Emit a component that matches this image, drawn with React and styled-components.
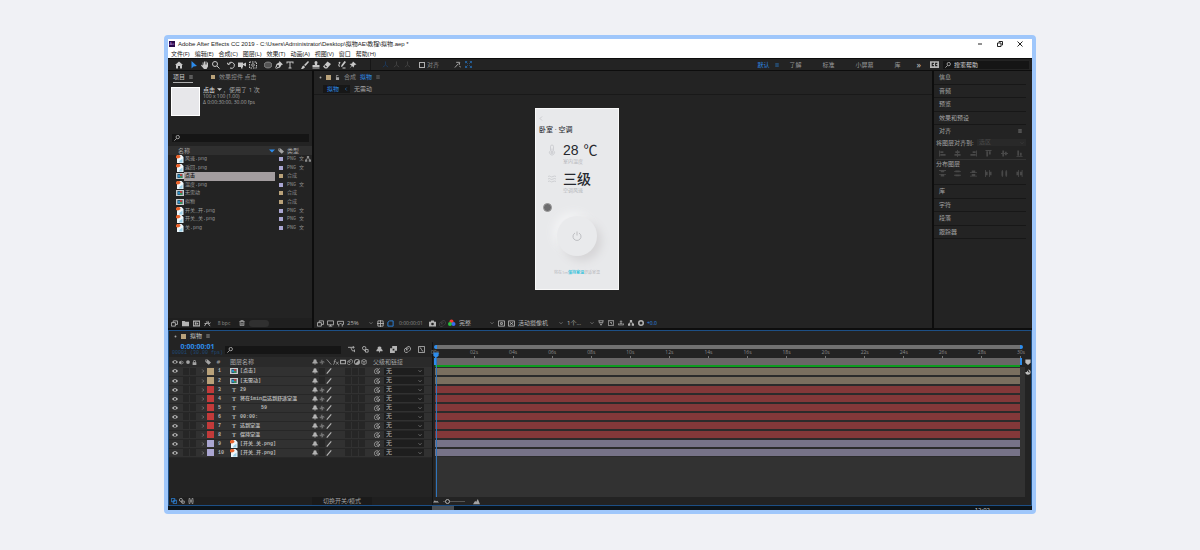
import { useState } from "react";
import styled, { createGlobalStyle, css } from "styled-components";

const GlobalStyle = createGlobalStyle`
  * {
    box-sizing: border-box;
  }

  body {
    margin: 0;
    background: #f0f1f5;
    color: #a4a4a4;
    font-family: "Open Sans", "Noto Sans CJK SC", sans-serif;
    font-size: 6px;
    line-height: 8px;
  }

  button, input, select {
    margin: 0;
    padding: 0;
    border: 0;
    background: none;
    color: inherit;
    font: inherit;
    outline: none;
  }

  svg {
    display: block;
    flex: none;
  }
`;

/* ---------- icons ---------- */

const line = { fill: "none", stroke: "currentColor", strokeWidth: 2 };

const glyphs = {
  home: <path d="M8 1 0 8h2v7h4v-5h4v5h4V8h2z" />,
  arrow: <path d="M3 0v15l4-4 7-1z" />,
  hand: <path d="M3 3h2v4h1V1h2v6h1V1h2v6h1V3h2v8l-3 5H6L0 9l2-2 2 3z" />,
  zoom: <path {...line} d="M6 1a5 5 0 1 0 0 10A5 5 0 0 0 6 1M10 10l5 5" />,
  search: <path {...line} d="M10 1a4 4 0 1 0 0 9 4 4 0 0 0 0-9M7 9l-6 6" />,
  rotate: <path {...line} d="M3 7a6 6 0 1 1 3 7M0 3l3 5 4-4" />,
  camera: <path d="M0 3h10v3l6-3v8l-6-3v4h-1v3H6v-3H0z" />,
  anchor: <path {...line} strokeDasharray="3 2" d="M1 2h14v12H1zM4 8h8M8 4v8" />,
  ellipse: <path d="M8 2C3 2 0 5 0 8s3 6 8 6 8-3 8-6-3-6-8-6" fillOpacity=".3" stroke="currentColor" strokeWidth="1" />,
  pen: <path d="m9 0 7 7-3 1-3 5-9 3 4-4a2 2 0 1 0-1-1L0 15 3 6l5-3z" />,
  type: <path d="M1 1h14v4h-2V3H9v10h2v2H5v-2h2V3H3v2H1z" />,
  brush: <path d="m14 0 2 2-7 8-3-2zM5 9l3 3c-1 3-4 4-8 4 2-2 2-6 5-7" />,
  stamp: <path d="M6 8 5 3a3 3 0 0 1 6 0l-1 5h5v4H1V8zM1 13h14v2H1z" />,
  eraser: <path d="m9 1 7 5-8 9H4l-4-4zM3 10l3 3 2-2-4-3z" fillRule="evenodd" />,
  roto: <path d="m13 0 3 2-7 9-3 1 1-4zM1 3c3-3 5 0 3 2S2 9 4 10l-1 2C-1 9 1 7 2 5zM9 13h6v2H9z" />,
  pin: <path d="m8 1 7 6-4 1-2 5-3-3-5 5 4-6-4-3 5-1z" />,
  axis: <path {...line} d="M8 1v8l-6 5M8 9l6 5" />,
  share: <path {...line} d="M2 15l8-9M5 3h8l-1 6M12 11l4 4" />,
  snap: <path {...line} d="m1 1 5 5M15 1l-5 5M1 15l5-5M15 15l-5-5M1 5V1h4M11 1h4v4M1 11v4h4M11 15h4v-4" />,
  menu: <path {...line} d="M1 3h14M1 8h14M1 13h14" />,
  badge: <path d="M0 2h16v12H0zM3 5v6h4V9H5V7h2V5zM9 5v6h4V9h-2V7h2V5z" fillRule="evenodd" />,
  lock: <path d="M4 7V4a4 4 0 0 1 8 0v3h2v9H2V7zm2 0h4V4a2 2 0 0 0-4 0z" fillRule="evenodd" />,
  unlock: <path d="M3 7V4a4 4 0 0 1 8-1H9a2 2 0 0 0-4 1v3h8v9H3z" />,
  down: <path {...line} d="m2 5 6 6 6-6" />,
  right: <path {...line} d="m5 2 6 6-6 6" />,
  left: <path {...line} d="m11 2-6 6 6 6" />,
  triangle: <path d="M0 4h16l-8 8z" />,
  tag: <path d="M1 1h6l9 8-6 6-9-8zM4 3a1 1 0 1 0 0 3 1 1 0 0 0 0-3" fillRule="evenodd" />,
  tree: <path d="M5 0h6v5l2 4h3v6h-6V9h1L8 5 5 9h1v6H0V9h3l2-4z" />,
  layers: <path {...line} d="M1 6h9v8H1zM5 6V2h10v8h-5" />,
  folder: <path d="M0 2h6l2 2h8v10H0z" />,
  comp: <path d="M0 1h16v14H0zm2 3v8h12V4zm2 1h4v6H4zm5 1h3v4H9z" fillRule="evenodd" />,
  adjust: <path {...line} d="m1 14 5-8M5 3l9 11M9 2l2 7 4-3M1 8h7" />,
  trash: <path {...line} d="M1 4h14M5 3V1h6v2M3 5v10h10V5M6 7v6M10 7v6" />,
  screen: <path {...line} d="M1 2h14v9H1zM4 14h8M8 11v3" />,
  goggles: <path {...line} d="M1 3h14v7h-4L8 7l-3 3H1zM4 11v4M12 11v4" />,
  grid: <path {...line} d="M2 2h12v12H2zM8 0v16M0 8h16" />,
  mask: <path {...line} d="M2 14V5l4-3h8v12z" />,
  photo: <path d="M5 1h6l1 3h4v11H0V4h4zm3 5a3 3 0 1 0 0 6 3 3 0 0 0 0-6" fillRule="evenodd" />,
  roi: <path {...line} d="M1 2h14v12H1zM6 6h4v4H6z" />,
  checker: <path {...line} d="M1 2h14v12H1zM4 5l8 6M12 5l-8 6" />,
  funnel: <path {...line} d="M1 2h14M3 2v5h10V2M5 9l3 5 3-5" />,
  bolt: <path {...line} d="M1 1h14v14H1zM5 4l6 8M11 4 8 8" />,
  export: <path {...line} d="M1 9v4h14V9M4 9h8M8 9V2M5 5l3-3 3 3" />,
  aperture: <path {...line} strokeWidth="4" d="M8 2a6 6 0 1 0 0 12A6 6 0 0 0 8 2" />,
  eye: <path d="M0 8c4-6 12-6 16 0-4 6-12 6-16 0m8-3a3 3 0 1 0 0 6 3 3 0 0 0 0-6" fillRule="evenodd" />,
  speaker: <path d="M0 5h3l5-4v14l-5-4H0zM10 3c6 1 6 9 0 10v-2c3-1 3-5 0-6z" />,
  dot: <circle cx="8" cy="8" r="5" />,
  sun: <path d="M7 1h2v4h4v2h2v2h-4v4H9v2H7v-4H3V9H1V7h4V3h2z" opacity=".5" />,
  person: <path d="M8 1a4 4 0 0 1 4 5l3 3v3H9v3H7v-3H1V9l3-3a4 4 0 0 1 4-5" />,
  slash: <path {...line} strokeWidth="3" d="M14 1 2 15" />,
  backslash: <path {...line} d="m2 1 12 14" />,
  film: <path d="M0 2h16v12H0zm3 3v6h10V5z" fillRule="evenodd" />,
  rings: <path {...line} d="M6 5a5 5 0 1 0 4 7M7 10a5 5 0 1 1 5 1M5 10l6-6" />,
  half: <path d="M8 0a8 8 0 1 0 0 16A8 8 0 0 0 8 0m0 2a6 6 0 0 1 4 2l-8 8A6 6 0 0 1 8 2" fillRule="evenodd" />,
  cube: <path {...line} d="m8 1 6 3v8l-6 3-6-3V4zM2 4l6 4 6-4M8 8v7" />,
  spiral: <path {...line} d="M13 4A7 7 0 1 0 15 8c0 5-9 5-8 0 1-4 6-2 4 1M12 4l3-3" />,
  flow: <path {...line} d="M0 3h6l4 8h5M6 3h9M12 0v6M15 8v6" />,
  spheres: <path {...line} d="M5 1a4 4 0 1 0 0 8 4 4 0 0 0 0-8M8 8h6v6H8zM5 9l3 4" />,
  graph: <path {...line} d="M1 1h14v14H1zM4 4c5 0 3 8 8 8" />,
  blend: <path d="M5 0h11v11h-5v5H0V5h5zm1 6v4h4V6z" fillRule="evenodd" />,
  copy: <path {...line} d="M1 1h9v9H1zM6 6h9v9H6z" />,
  brackets: <path {...line} d="M6 1H3v5L1 8l2 2v5h3M10 1h3v5l2 2-2 2v5h-3M6 5h4v6H6z" />,
  peakSmall: <path d="m0 12 5-6 3 3 3-2 5 5z" />,
  peaks: <path d="m0 14 5-8 2 3 4-7 5 12z" />,
  marker: <path d="M1 1h14v9l-7 6-7-6z" />,
  globe: <path d="M8 1a7 7 0 1 1-7 7h4l1-4 4 5h3z" />,
  fx: <path {...line} d="M8 1C5 0 5 3 4 8s-1 7-4 6M2 6h5M8 7l7 8M15 7l-7 8" />,
  alignLeft: <path d="M0 1h2v14H0zM3 3h7v4H3zM3 9h12v4H3z" />,
  alignCenter: <path d="M7 0h2v3h4v4H9v2h6v4H9v3H7v-3H1V9h6V7H3V3h4z" />,
  alignRight: <path d="M14 1h2v14h-2zM6 3h7v4H6zM1 9h12v4H1z" />,
  alignTop: <path d="M1 0h14v2H1zM3 3h4v12H3zM9 3h4v7H9z" />,
  alignMiddle: <path d="M3 1h4v6h2V4h4v3h3v2h-3v3H9V9H7v6H3V9H0V7h3z" />,
  alignBottom: <path d="M1 14h14v2H1zM3 1h4v12H3zM9 6h4v7H9z" />,
  distTop: <path d="M0 0h16v2h-4v3H4V2H0zM0 9h16v2h-4v4H4v-4H0z" />,
  distMiddle: <path d="M3 1h10v4H3zM0 2h16v2H0zM3 10h10v4H3zM0 11h16v2H0z" />,
  distBottom: <path d="M4 1h8v4h4v2H0V5h4zM4 9h8v4h4v2H0v-2h4z" />,
  distLeft: <path d="M0 0h2v4h4v8H2v4H0zM9 0h2v4h4v8h-4v4H9z" />,
  distCenter: <path d="M1 3h4v10H1zM2 0h2v16H2zM10 3h4v10h-4zM11 0h2v16h-2z" />,
  distRight: <path d="M5 0h2v16H5v-4H1V4h4zM13 0h2v16h-2v-4h-4V4h4z" />,
};

const Icon = ({ name, size = 7 }) => (
  <svg width={size} height={size} viewBox="0 0 16 16" fill="currentColor" aria-hidden="true">
    {glyphs[name]}
  </svg>
);

const PngIcon = () => (
  <svg width="8" height="8" viewBox="0 0 16 16" aria-hidden="true">
    <path d="M2 0h9l4 4v12H2z" fill="#eef6fa" />
    <path d="M0 2c3-3 8-3 9 1 0 3-5 5-9 3z" fill="#e8632c" />
    <path d="M6 15c0-4 4-5 7-8v8z" fill="#9bd0e8" />
  </svg>
);

const CompIcon = () => (
  <svg width="8" height="8" viewBox="0 0 16 16" aria-hidden="true">
    <path d="M0 2h16v12H0z" fill="#c6cbcd" />
    <path d="M3 4h10v8H3z" fill="#27414e" />
    <circle cx="6" cy="8" r="3" fill="#2e8fc4" />
    <circle cx="10" cy="6" r="2" fill="#e0403a" />
    <circle cx="10" cy="10" r="2" fill="#3fae5a" />
  </svg>
);

const RgbIcon = () => (
  <svg width="8" height="8" viewBox="0 0 16 16" aria-hidden="true">
    <circle cx="7" cy="5" r="4" fill="#f03a30" />
    <circle cx="4" cy="10" r="4" fill="#28c13f" />
    <circle cx="11" cy="10" r="4" fill="#3a6cf0" />
  </svg>
);

/* ---------- shared parts ---------- */

const Page = styled.div`
  padding: 35px 164px;
`;

const Window = styled.main`
  border: 4px solid #9fc7fb;
  border-radius: 4px;
  background: #0d0d0d;
  overflow: hidden;
  white-space: nowrap;
`;

const IconButton = styled.button`
  display: flex;
  flex: none;
  align-items: center;
  justify-content: center;
  width: ${({ $width }) => $width || 10}px;
  height: 8px;
  color: ${({ $color }) => $color || "#b4b4b4"};
`;

const Swatch = styled.span`
  display: block;
  flex: none;
  width: ${({ $size }) => $size || 5}px;
  height: ${({ $size }) => $size || 5}px;
  background: ${({ $color }) => $color};
`;

const Spacer = styled.span`
  flex: 1;
`;

const SearchBox = styled.label`
  display: flex;
  align-items: center;
  gap: 3px;
  height: 8px;
  padding: 0 2px;
  background: #151515;
  color: #c0c0c0;
  ${({ $width }) => $width && css`width: ${$width}px;`}

  input {
    flex: 1;
    min-width: 0;
    height: 8px;
  }

  input::placeholder {
    color: #d0d0d0;
    opacity: 1;
  }
`;

const SelectBox = styled.span`
  display: grid;
  flex: none;
  align-items: center;
  width: ${({ $width }) => $width}px;
  height: 7px;
  background: ${({ $fill }) => $fill || "transparent"};
  color: ${({ $color }) => $color || "#b4b4b4"};
  font: 400 6px/7px "Open Sans", "Noto Sans CJK SC", sans-serif;

  select,
  svg {
    grid-area: 1 / 1;
  }

  select {
    appearance: none;
    width: 100%;
    height: 7px;
    padding-left: 2px;
  }

  svg {
    justify-self: end;
    margin-right: 2px;
    pointer-events: none;
  }
`;

const Select = ({ label, options, ...rest }) => (
  <SelectBox {...rest}>
    <select aria-label={label}>
      {options.map((option) => (
        <option key={option}>{option}</option>
      ))}
    </select>
    <Icon name="down" size={4} />
  </SelectBox>
);

/* ---------- title bar, menu, toolbar ---------- */

const TitleBar = styled.header`
  display: flex;
  align-items: center;
  gap: 3px;
  height: 10px;
  padding: 0 7px 0 1px;
  background: #fff;
  color: #222;
`;

const AppBadge = styled.span`
  width: 6px;
  height: 6px;
  background: #2a0a4a;
  color: #c9a2f5;
  font-size: 4px;
  line-height: 6px;
  text-align: center;
`;

const Title = styled.h1`
  flex: 1;
  margin: 0;
  font-family: "Liberation Sans", "Noto Sans CJK SC", sans-serif;
  font-size: 6px;
  font-weight: 400;
`;

const WindowButtons = styled.div`
  display: flex;
  gap: 10px;
`;

const MenuBar = styled.nav`
  display: flex;
  gap: 5px;
  height: 9px;
  padding-left: 3px;
  background: #fff;
  color: #222;
`;

const Toolbar = styled.div`
  display: flex;
  align-items: center;
  gap: 4px;
  height: 11px;
  margin: 1px 0;
  padding: 0 3px 0 5px;
  background: #232323;
`;

const ToolGroup = styled.div`
  display: flex;
  align-items: center;
`;

const Divider = styled.span`
  width: 1px;
  height: 11px;
  margin: 0 5px 0 8px;
  background: #161616;
`;

const CheckLabel = styled.label`
  display: flex;
  align-items: center;
  gap: 2px;
  margin: 0 9px 0 2px;
  color: #8a8a8a;

  input {
    appearance: none;
    width: 6px;
    height: 6px;
    border: 1px solid #b0b0b0;
  }
`;

const Workspaces = styled.nav`
  display: flex;
  gap: 10px;
`;

const Workspace = styled.button`
  display: flex;
  align-items: center;
  gap: 6px;
  padding-right: ${({ $active }) => ($active ? 0 : 11)}px;
  color: ${({ $active }) => ($active ? "#2d8ceb" : "#9a9a9a")};
`;

const More = styled.button`
  margin: 0 4px 0 1px;
  color: #c8c8c8;
  font-size: 9px;
`;

const menus = ["文件(F)", "编辑(E)", "合成(C)", "图层(L)", "效果(T)", "动画(A)", "视图(V)", "窗口", "帮助(H)"];
const toolGroups = [
  ["home"],
  ["arrow", "hand", "zoom"],
  ["rotate", "camera", "anchor"],
  ["ellipse", "pen", "type"],
  ["brush", "stamp", "eraser"],
  ["roto", "pin"],
];

const TopBars = () => {
  const [tool, setTool] = useState("arrow");
  const [workspace, setWorkspace] = useState("默认");

  return (
    <>
      <TitleBar>
        <AppBadge>Ae</AppBadge>
        <Title>Adobe After Effects CC 2019 - C:\Users\Administrator\Desktop\拟物AE\教程\拟物.aep *</Title>
        <WindowButtons>
          <IconButton $color="#222" aria-label="最小化">
            <svg width="6" height="6" viewBox="0 0 6 6"><path d="M1 3h4" stroke="#222" /></svg>
          </IconButton>
          <IconButton $color="#222" aria-label="还原">
            <svg width="6" height="6" viewBox="0 0 12 12" fill="none" stroke="#222" strokeWidth="2">
              <path d="M1 4h7v7H1zM4 3V1h7v7H9" />
            </svg>
          </IconButton>
          <IconButton $color="#222" aria-label="关闭">
            <svg width="6" height="6" viewBox="0 0 12 12" stroke="#222" strokeWidth="2">
              <path d="m1 1 10 10M11 1 1 11" />
            </svg>
          </IconButton>
        </WindowButtons>
      </TitleBar>
      <MenuBar>
        {menus.map((menu) => (
          <button key={menu}>{menu}</button>
        ))}
      </MenuBar>
      <Toolbar>
        {toolGroups.map((group) => (
          <ToolGroup key={group[0]}>
            {group.map((name) => (
              <IconButton
                key={name}
                $width={11}
                $color={tool === name ? "#2d8ceb" : "#c8c8c8"}
                aria-label={name}
                onClick={() => setTool(name)}
              >
                <Icon name={name} size={8} />
              </IconButton>
            ))}
          </ToolGroup>
        ))}
        <Divider />
        <ToolGroup>
          <IconButton $width={11} $color="#1d3c60" aria-label="本地轴"><Icon name="axis" /></IconButton>
          <IconButton $width={11} $color="#454545" aria-label="世界轴"><Icon name="axis" /></IconButton>
          <IconButton $width={11} $color="#454545" aria-label="视图轴"><Icon name="axis" /></IconButton>
        </ToolGroup>
        <CheckLabel>
          <input type="checkbox" />
          对齐
        </CheckLabel>
        <ToolGroup>
          <IconButton $width={11} aria-label="吸附"><Icon name="share" /></IconButton>
          <IconButton $width={11} $color="#2667a8" aria-label="边界"><Icon name="snap" /></IconButton>
        </ToolGroup>
        <Spacer />
        <Workspaces>
          {["默认", "了解", "标准", "小屏幕", "库"].map((name) => (
            <Workspace key={name} $active={workspace === name} onClick={() => setWorkspace(name)}>
              {name}
              {workspace === name && <Icon name="menu" size={4} />}
            </Workspace>
          ))}
        </Workspaces>
        <More aria-label="更多">»</More>
        <IconButton aria-label="同步"><Icon name="badge" size={9} /></IconButton>
        <SearchBox $width={86}>
          <Icon name="search" size={6} />
          <input aria-label="搜索帮助" placeholder="搜索帮助" />
        </SearchBox>
      </Toolbar>
    </>
  );
};

/* ---------- project panel ---------- */

const Workbench = styled.div`
  display: flex;
  gap: 2px;
`;

const Panel = styled.section`
  display: flex;
  flex-direction: column;
  background: #232323;
`;

const ProjectPanel = styled(Panel)`
  flex: none;
  width: 144px;
`;

const TabRow = styled.div`
  display: flex;
  align-items: center;
  gap: ${({ $gap }) => $gap || 4}px;
  height: ${({ $height }) => $height || 12}px;
  padding-left: 5px;
`;

const Tab = styled.button`
  display: flex;
  align-items: center;
  gap: 4px;
  height: 11px;
  color: ${({ $active }) => ($active ? "#c4c4c4" : "#8a8a8a")};
  border-bottom: 1px solid ${({ $underline }) => ($underline ? "#b0b0b0" : "transparent")};

  b {
    color: #2d8ceb;
    font-weight: 400;
  }
`;

const ItemInfo = styled.div`
  display: flex;
  gap: 3px;
  padding: 4px 3px 18px;
  font-size: 5px;
  line-height: 6px;

  p {
    margin: 0;
  }

  p:first-child {
    font-size: 6px;
  }

  svg {
    display: inline;
  }
`;

const Thumbnail = styled.div`
  width: 29px;
  height: 29px;
  border: 1px solid #fff;
  background: #e7e7ea;
`;

const ItemName = styled.strong`
  color: #d8d8d8;
  font-weight: 500;
`;

const ProjectSearch = styled(SearchBox)`
  margin: 0 3px 4px 4px;
`;

const Table = styled.table`
  width: 100%;
  border-collapse: collapse;
  table-layout: fixed;
  font-weight: 400;

  th,
  td {
    padding: 0;
    font-weight: 400;
    text-align: left;
    vertical-align: middle;
  }
`;

const ProjectTable = styled(Table)`
  height: 86px;

  thead {
    height: 9px;
    background: #2f2f2f;
  }
`;

const NameHeader = styled.span`
  display: flex;
  align-items: center;
  justify-content: space-between;
  padding-left: 10px;

  svg {
    color: #2d8ceb;
  }
`;

const FileRow = styled.tr`
  font-family: "Liberation Mono", "Noto Sans CJK SC", monospace;
  font-size: 5px;
  color: #8c8c8c;

  td:nth-child(2) {
    background: ${({ $selected }) => ($selected ? "#a39d9f" : "transparent")};
    color: ${({ $selected }) => ($selected ? "#1c1c1c" : "#9a9a9a")};
    font-weight: ${({ $selected }) => ($selected ? 700 : 400)};
  }
`;

const CellFlex = styled.span`
  display: flex;
  align-items: center;
  justify-content: ${({ $justify }) => $justify || "flex-start"};
  gap: ${({ $gap }) => $gap || 0}px;
  height: 8px;
`;

const FileName = styled.span`
  padding-left: 1px;
`;

const PanelFooter = styled.footer`
  display: flex;
  align-items: center;
  height: 10px;
  margin-top: auto;
  padding-left: 1px;
  background: ${({ $fill }) => $fill || "#1f1f1f"};
`;

const Depth = styled.button`
  width: 22px;
  color: #8a8a8a;
  font-size: 5px;
`;

const Pill = styled.span`
  width: 20px;
  height: 7px;
  border-radius: 4px;
  background: #303030;
`;

const LAVENDER = "#aaa6d2";
const SAND = "#b9a27a";
const RED = "#c23a3a";

const files = [
  { name: "风速.png", png: true, used: true },
  { name: "返回.png", png: true },
  { name: "点击" },
  { name: "温度.png", png: true },
  { name: "无需动" },
  { name: "拟物" },
  { name: "开关_开.png", png: true },
  { name: "开关_关.png", png: true },
  { name: "关.png", png: true },
];

const Project = () => {
  const [selected, setSelected] = useState("点击");

  return (
    <ProjectPanel>
      <TabRow $gap={18}>
        <Tab $active $underline>项目 <Icon name="menu" size={4} /></Tab>
        <Tab><Swatch $color={SAND} $size={4} />效果控件 点击</Tab>
      </TabRow>
      <ItemInfo>
        <Thumbnail />
        <div>
          <p><ItemName>点击 <Icon name="triangle" size={5} /></ItemName> ，使用了 1 次</p>
          <p>100 x 100 (1.00)</p>
          <p>Δ 0:00:30:00, 30.00 fps</p>
        </div>
      </ItemInfo>
      <ProjectSearch>
        <Icon name="search" size={6} />
        <input aria-label="搜索项目" />
      </ProjectSearch>
      <ProjectTable>
        <colgroup>
          <col style={{ width: 16 }} />
          <col />
          <col style={{ width: 12 }} />
          <col style={{ width: 25 }} />
        </colgroup>
        <thead>
          <tr>
            <th colSpan="2"><NameHeader>名称 <Icon name="triangle" size={6} /></NameHeader></th>
            <th><CellFlex $justify="center"><Icon name="tag" size={6} /></CellFlex></th>
            <th>类型</th>
          </tr>
        </thead>
        <tbody>
          {files.map(({ name, png, used }) => (
            <FileRow key={name} $selected={name === selected} onClick={() => setSelected(name)}>
              <td><CellFlex $justify="flex-end">{png ? <PngIcon /> : <CompIcon />}</CellFlex></td>
              <td><FileName>{name}</FileName></td>
              <td><CellFlex $justify="center"><Swatch $color={png ? LAVENDER : SAND} $size={4} /></CellFlex></td>
              <td>
                <CellFlex $gap={1}>
                  {png ? "PNG 文" : "合成"}
                  {used && <Icon name="tree" size={6} />}
                </CellFlex>
              </td>
            </FileRow>
          ))}
        </tbody>
      </ProjectTable>
      <PanelFooter>
        {["layers", "folder", "comp", "adjust"].map((name) => (
          <IconButton key={name} $width={11} aria-label={name}><Icon name={name} /></IconButton>
        ))}
        <Depth>8 bpc</Depth>
        <IconButton $width={14} aria-label="删除"><Icon name="trash" size={6} /></IconButton>
        <Pill />
      </PanelFooter>
    </ProjectPanel>
  );
};

/* ---------- composition viewer ---------- */

const ViewerPanel = styled(Panel)`
  flex: 1;
  min-width: 0;
`;

const Flow = styled.div`
  display: flex;
  align-items: center;
  gap: 4px;
  height: 12px;
  padding-left: 9px;
  border-bottom: 1px solid #191919;
`;

const FlowChip = styled.button`
  display: flex;
  align-items: center;
  gap: 5px;
  height: 8px;
  padding: 0 2px 0 4px;
  background: #171717;
  color: #2d8ceb;
`;

const Canvas = styled.div`
  display: flex;
  justify-content: center;
  padding: 13px 92px 28px 0;
`;

const Artboard = styled.article`
  display: flex;
  flex-direction: column;
  width: 84px;
  border: 1px solid #f8f8f8;
  padding: 7px 3px 12px;
  background: #e8e9eb;
  color: #b6b7bb;
`;

const RoomName = styled.h2`
  margin: 3px 0 7px;
  color: #34363c;
  font-size: 7px;
  font-weight: 500;
  line-height: 11px;
`;

const Reading = styled.div`
  display: grid;
  grid-template-columns: 10px 1fr;
  align-content: start;
  align-items: center;
  column-gap: 6px;
  height: 29px;
  padding-left: 8px;

  strong {
    display: flex;
    gap: 5px;
    color: #25272d;
    font: 500 14px/16px "Liberation Sans", "Noto Sans CJK SC", sans-serif;
  }

  span {
    font-weight: 400;
  }

  small {
    grid-column: 2;
    font-size: 5px;
    line-height: 6px;
  }
`;

const TapDot = styled.span`
  width: 9px;
  height: 9px;
  margin: 3px 0 0 4px;
  border: 1px solid #999;
  border-radius: 50%;
  background: #6c6c6e;
`;

const PowerButton = styled.button`
  display: flex;
  align-items: center;
  justify-content: center;
  align-self: center;
  width: 40px;
  height: 40px;
  margin: 4px 0 13px;
  border-radius: 50%;
  background: #e9eaec;
  box-shadow: 5px 5px 8px #d6d5d7, -4px -4px 8px #f2f3f4;
`;

const Hint = styled.p`
  margin: 0;
  font-size: 4px;
  text-align: center;

  b {
    color: #45c4dc;
  }
`;

const Timecode = styled.button`
  width: 32px;
  color: #8c8c8c;
  font-size: 5px;
`;

const Exposure = styled.button`
  margin-left: 1px;
  color: #2d8ceb;
  font-size: 5px;
`;

const Viewer = () => (
  <ViewerPanel>
    <TabRow>
      <Icon name="dot" size={3} />
      <Swatch $color={SAND} $size={5} />
      <Icon name="unlock" size={5} />
      <Tab>合成 <b>拟物</b> <Icon name="menu" size={4} /></Tab>
    </TabRow>
    <Flow>
      <FlowChip>拟物 <Icon name="left" size={4} /></FlowChip>
      <button>无需动</button>
    </Flow>
    <Canvas>
      <Artboard>
        <svg width="4" height="5" viewBox="0 0 8 10" fill="none" stroke="#b0b1b5">
          <path d="M6 1 2 5l4 4" />
        </svg>
        <RoomName>卧室 · 空调</RoomName>
        <Reading>
          <svg width="10" height="12" viewBox="0 0 20 24" fill="none" stroke="#c3c4c8" strokeWidth="1.4">
            <path d="M7 13V5a3 3 0 0 1 6 0v8a5 5 0 1 1-6 0M10 9v10" />
            <circle cx="10" cy="17" r="2" />
          </svg>
          <strong><span>28</span> <span>℃</span></strong>
          <small>室内温度</small>
        </Reading>
        <Reading>
          <svg width="10" height="8" viewBox="0 0 20 16" fill="none" stroke="#c3c4c8" strokeWidth="1.4">
            <path d="M2 3q3-2 5 0t5 0 6 0M2 8q3-2 5 0t5 0 6 0M2 13q3-2 5 0t5 0 6 0" />
          </svg>
          <strong>三级</strong>
          <small>空调风速</small>
        </Reading>
        <TapDot />
        <PowerButton aria-label="电源">
          <svg width="10" height="10" viewBox="0 0 20 20" fill="none" stroke="#b4b5b9" strokeWidth="1.6">
            <path d="M6 4a8 8 0 1 0 8 0M10 1v8" />
          </svg>
        </PowerButton>
        <Hint>将在1m<b>保持室温</b>舒适室温</Hint>
      </Artboard>
    </Canvas>
    <PanelFooter $fill="#232323">
      {["layers", "screen", "goggles"].map((name) => (
        <IconButton key={name} aria-label={name}><Icon name={name} /></IconButton>
      ))}
      <Select label="放大率" options={["25%"]} $width={30} />
      <IconButton aria-label="网格"><Icon name="grid" /></IconButton>
      <IconButton $color="#2d8ceb" aria-label="蒙版"><Icon name="mask" /></IconButton>
      <Timecode>0:00:00:01</Timecode>
      <IconButton aria-label="快照"><Icon name="photo" /></IconButton>
      <IconButton $color="#444" aria-label="显示快照"><Icon name="rings" /></IconButton>
      <IconButton aria-label="通道"><RgbIcon /></IconButton>
      <Select label="分辨率" options={["完整"]} $width={39} />
      <IconButton aria-label="目标区域"><Icon name="roi" /></IconButton>
      <IconButton aria-label="透明网格"><Icon name="checker" /></IconButton>
      <Select label="视图" options={["活动摄像机"]} $width={49} />
      <Select label="视图布局" options={["1个..."]} $width={31} />
      {["funnel", "bolt", "export", "tree", "aperture"].map((name) => (
        <IconButton key={name} aria-label={name}><Icon name={name} size={6} /></IconButton>
      ))}
      <Exposure>+0.0</Exposure>
    </PanelFooter>
  </ViewerPanel>
);

/* ---------- right sidebar ---------- */

const SidePanel = styled(Panel)`
  flex: none;
  width: 98px;
  padding-right: 6px;
`;

const Accordion = styled.div`
  display: grid;
  grid-auto-rows: 1fr;
  height: 54px;
`;

const AccordionItem = styled.button`
  padding-left: 5px;
  border-bottom: 1px solid #171717;
  text-align: left;
`;

const AlignSection = styled.div`
  display: flex;
  flex-direction: column;
  padding: 0 0 5px 2px;
  border-bottom: 1px solid #171717;
`;

const AlignHeader = styled.div`
  display: flex;
  align-items: center;
  justify-content: space-between;
  height: 12px;
  padding: 0 4px 0 3px;
`;

const AlignTarget = styled.div`
  display: flex;
  align-items: center;
  justify-content: space-between;
  height: 11px;
`;

const AlignIcons = styled.div`
  display: flex;
  justify-content: space-between;
  height: 11px;
  align-items: center;
`;

const Distribute = styled.p`
  margin: 0;
  border-top: 1px solid #333;
`;

const Sidebar = () => (
  <SidePanel as="aside">
    <Accordion>
      {["信息", "音频", "预览", "效果和预设"].map((name) => (
        <AccordionItem key={name}>{name}</AccordionItem>
      ))}
    </Accordion>
    <AlignSection>
      <AlignHeader>对齐 <Icon name="menu" size={4} /></AlignHeader>
      <AlignTarget>
        将图层对齐到:
        <Select label="对齐目标" options={["选区"]} $width={49} $fill="#292929" $color="#484848" />
      </AlignTarget>
      <AlignIcons>
        {["alignLeft", "alignCenter", "alignRight", "alignTop", "alignMiddle", "alignBottom"].map((name) => (
          <IconButton key={name} $color="#484848" $width={12} aria-label={name}><Icon name={name} /></IconButton>
        ))}
      </AlignIcons>
      <Distribute>分布图层</Distribute>
      <AlignIcons>
        {["distTop", "distMiddle", "distBottom", "distLeft", "distCenter", "distRight"].map((name) => (
          <IconButton key={name} $color="#484848" $width={12} aria-label={name}><Icon name={name} /></IconButton>
        ))}
      </AlignIcons>
    </AlignSection>
    <Accordion>
      {["库", "字符", "段落", "跟踪器"].map((name) => (
        <AccordionItem key={name}>{name}</AccordionItem>
      ))}
    </Accordion>
  </SidePanel>
);

/* ---------- timeline ---------- */

const TimelinePanel = styled(Panel)`
  margin-top: 2px;
  border: 1px solid #1d4f85;
`;

const TimelineBody = styled.div`
  display: flex;
`;

const LayerColumn = styled.div`
  display: flex;
  flex: none;
  flex-direction: column;
  width: 264px;
  border-right: 1px solid #131313;
`;

const LayerTools = styled.div`
  display: flex;
  align-items: center;
  height: 15px;
  padding: 0 4px 0 1px;
`;

const CurrentTime = styled.button`
  width: 55px;
  color: #2d8ceb;
  font-size: 7px;
  font-weight: 700;
  line-height: 7px;
  text-align: center;

  small {
    display: block;
    color: #1f4a78;
    font: 400 5px/6px "Liberation Mono", monospace;
  }
`;

const LayerTable = styled(Table)`
  thead tr {
    height: 10px;
    background: #2a2a2a;
  }
`;

const LayerRow = styled.tr`
  height: 9px;
  border-bottom: 1px solid #272727;
  background: #313131;
  color: #b4b4b4;
  font-family: "Liberation Mono", "Noto Sans CJK SC", monospace;
  font-size: 5px;

  td {
    font-weight: 700;
  }
`;

const Box = styled.span`
  width: 6px;
  height: 7px;
  background: #262626;
`;

const LayerName = styled.span`
  white-space: pre;
`;

const TypeMark = styled.span`
  width: 8px;
  font: 700 6px/8px "Liberation Serif", serif;
  text-align: center;
`;

const TimelineFooter = styled(PanelFooter)`
  height: 8px;
  padding-left: 0;
`;

const ModeSwitch = styled.button`
  width: 60px;
  margin: 0 60px 0 auto;
  background: #1a1a1a;
`;

const TimeColumn = styled.div`
  position: relative;
  display: flex;
  flex: 1;
  flex-direction: column;
  padding-top: 3px;
`;

const Navigator = styled.div`
  height: 4px;
  margin: 0 8px 0 1px;
  border: solid #2d8ceb;
  border-width: 0 3px;
  border-radius: 2px;
  background: #707070;
`;

const Ruler = styled.div`
  display: flex;
  justify-content: space-between;
  height: 9px;
  margin: 0 9px 0 1px;
  font-size: 5px;
  line-height: 7px;
`;

const Tick = styled.span`
  display: flex;
  flex-direction: column;
  align-items: center;
  width: 2px;
  color: #8c8c8c;

  &::after {
    content: "";
    width: 1px;
    height: 2px;
    background: #777;
  }
`;

const WorkArea = styled.div`
  height: 7px;
  margin: 0 9px 0 1px;
  border: solid #2d8ceb;
  border-width: 0 2px;
  background: #686666;
`;

const CacheBar = styled.div`
  height: 2px;
  margin: 0 11px 0 2px;
  background: #0d9b1f;
`;

const Tracks = styled.div`
  margin: 0 6px 0 2px;
  padding: 0 5px 40px 0;
  background: #323232;
`;

const Track = styled.div`
  height: 9px;
  border: solid #2b2b2b;
  border-width: 1px 0;
  background: ${({ $color }) => $color};
`;

const Playhead = styled.div`
  position: absolute;
  top: 10px;
  bottom: 8px;
  left: 0;
  display: flex;
  flex-direction: column;
  align-items: center;
  width: 6px;
  color: #2d8ceb;

  &::after {
    content: "";
    flex: 1;
    width: 1px;
    background: #2f74bb;
  }
`;

const Markers = styled.div`
  position: absolute;
  top: 17px;
  right: 0;
  display: flex;
  flex-direction: column;
  gap: 4px;
  color: #bdbdbd;
`;

const ZoomSlider = styled.input`
  appearance: none;
  width: 22px;
  height: 6px;
  margin: 0 8px 0 4px;
  background: linear-gradient(#555, #555) center / 100% 1px no-repeat;

  &::-webkit-slider-thumb {
    appearance: none;
    width: 5px;
    height: 5px;
    border: 1px solid #b0b0b0;
    border-radius: 50%;
    background: #232323;
  }
`;

const layers = [
  { name: "[点击]", kind: "comp" },
  { name: "[无需动]", kind: "comp" },
  { name: "29", kind: "text" },
  { name: "将在1min后达到舒适室温", kind: "text" },
  { name: "       59", kind: "text" },
  { name: "00:00:", kind: "text" },
  { name: "达到室温", kind: "text" },
  { name: "保持室温", kind: "text" },
  { name: "[开关_关.png]", kind: "png" },
  { name: "[开关_开.png]", kind: "png" },
];

const kinds = {
  comp: { swatch: SAND, track: "#7a6f5f", icon: <CompIcon /> },
  text: { swatch: RED, track: "#833839", icon: <TypeMark>T</TypeMark> },
  png: { swatch: LAVENDER, track: "#777388", icon: <PngIcon /> },
};

const columnWidths = [14, 17, 6, 9, 15, 82, 33, 25, 14, 40, 8];
const seconds = Array.from({ length: 16 }, (_, i) => `${String(i * 2).padStart(2, "0")}s`);

const LayerList = () => (
  <LayerTable>
    <colgroup>
      {columnWidths.map((width, i) => (
        <col key={i} style={{ width }} />
      ))}
    </colgroup>
    <thead>
      <tr>
        <th colSpan="2">
          <CellFlex $gap={1}>
            &nbsp;<Icon name="eye" size={6} /><Icon name="speaker" size={5} />
            <Icon name="dot" size={6} /><Icon name="lock" size={5} />
          </CellFlex>
        </th>
        <th colSpan="2"><CellFlex $justify="center"><Icon name="tag" size={6} /></CellFlex></th>
        <th>&nbsp;#</th>
        <th>图层名称</th>
        <th colSpan="2">
          <CellFlex $gap={1}>
            {["person", "sun", "backslash", "fx", "film", "rings", "half", "cube"].map((name) => (
              <Icon key={name} name={name} size={6} />
            ))}
          </CellFlex>
        </th>
        <th colSpan="3">&nbsp; 父级和链接</th>
      </tr>
    </thead>
    <tbody>
      {layers.map(({ name, kind }, i) => (
        <LayerRow key={name}>
          <td><CellFlex>&nbsp;<Icon name="eye" size={6} /></CellFlex></td>
          <td><CellFlex $gap={1}><Box /><Box /></CellFlex></td>
          <td><CellFlex $justify="center"><Icon name="right" size={4} /></CellFlex></td>
          <td><CellFlex $justify="center"><Swatch $color={kinds[kind].swatch} $size={7} /></CellFlex></td>
          <td><CellFlex>&nbsp;{i + 1}</CellFlex></td>
          <td>
            <CellFlex $gap={2}>
              {kinds[kind].icon}
              <LayerName>{name}</LayerName>
            </CellFlex>
          </td>
          <td>
            <CellFlex $gap={1}>
              <Icon name="person" size={6} />
              {kind === "text" ? <Icon name="sun" size={6} /> : <Box />}
              <Icon name="slash" size={6} />
            </CellFlex>
          </td>
          <td><CellFlex $gap={1}><Box /><Box /><Box /></CellFlex></td>
          <td><CellFlex $justify="center"><Icon name="spiral" size={6} /></CellFlex></td>
          <td>
            <CellFlex>
              <Select label={`${name.trim()} 父级`} options={["无"]} $width={40} $fill="#1e1e1e" />
            </CellFlex>
          </td>
          <td />
        </LayerRow>
      ))}
    </tbody>
  </LayerTable>
);

const Timeline = () => (
  <TimelinePanel>
    <TabRow $height={11}>
      <Icon name="dot" size={3} />
      <Swatch $color={SAND} $size={5} />
      <Tab $active>拟物 <Icon name="menu" size={4} /></Tab>
    </TabRow>
    <TimelineBody>
      <LayerColumn>
        <LayerTools>
          <CurrentTime>
            0:00:00:01
            <small>00001 (30.00 fps)</small>
          </CurrentTime>
          <SearchBox $width={116}>
            <Icon name="search" size={6} />
            <input aria-label="搜索图层" />
          </SearchBox>
          <Spacer />
          {["flow", "spheres", "person", "blend", "rings", "graph"].map((name) => (
            <IconButton key={name} $width={14} aria-label={name}><Icon name={name} /></IconButton>
          ))}
        </LayerTools>
        <LayerList />
        <TimelineFooter>
          <IconButton $width={9} $color="#2d8ceb" aria-label="图层开关"><Icon name="copy" size={6} /></IconButton>
          <IconButton $width={8} aria-label="转换控制"><Icon name="spheres" size={6} /></IconButton>
          <IconButton $width={9} aria-label="入点出点"><Icon name="brackets" size={6} /></IconButton>
          <ModeSwitch>切换开关/模式</ModeSwitch>
        </TimelineFooter>
      </LayerColumn>
      <TimeColumn>
        <Navigator />
        <Ruler>
          {seconds.map((label) => (
            <Tick key={label}>{label}</Tick>
          ))}
        </Ruler>
        <WorkArea />
        <CacheBar />
        <Tracks>
          {layers.map(({ name, kind }) => (
            <Track key={name} $color={kinds[kind].track} />
          ))}
        </Tracks>
        <TimelineFooter $fill="#232323">
          <Icon name="peakSmall" size={6} />
          <ZoomSlider type="range" aria-label="时间缩放" defaultValue="10" />
          <Icon name="peaks" size={7} />
        </TimelineFooter>
        <Playhead>
          <Icon name="marker" size={6} />
        </Playhead>
        <Markers>
          <Icon name="marker" size={6} />
          <Icon name="globe" size={6} />
        </Markers>
      </TimeColumn>
    </TimelineBody>
  </TimelinePanel>
);

const Taskbar = styled.footer`
  display: flex;
  align-items: flex-start;
  justify-content: space-between;
  height: 4px;
  padding: 0 42px 0 264px;
  background: #0c141a;
  color: #ddd;
  overflow: hidden;

  &::before {
    content: "";
    width: 22px;
    height: 4px;
    background: #4a4f54;
  }
`;

const App = () => (
  <Page>
    <GlobalStyle />
    <Window>
      <TopBars />
      <Workbench>
        <Project />
        <Viewer />
        <Sidebar />
      </Workbench>
      <Timeline />
      <Taskbar>12:02</Taskbar>
    </Window>
  </Page>
);

export default App;
